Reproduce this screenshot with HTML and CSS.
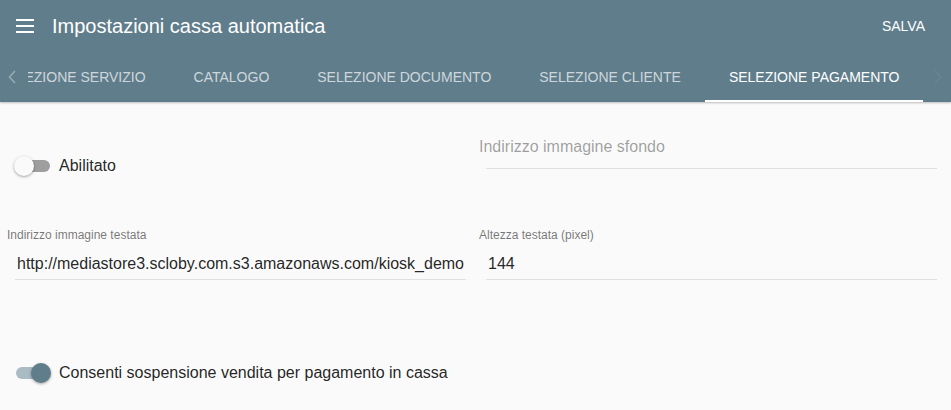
FILE: index.html
```html
<!DOCTYPE html>
<html lang="it">
<head>
<meta charset="utf-8">
<title>Impostazioni cassa automatica</title>
<link rel="stylesheet" href="styles.css">
</head>
<body>
<header class="appbar">
  <div class="toolbar">
    <span class="menu-btn" aria-label="menu">
      <svg width="18" height="14" viewBox="0 0 18 14"><rect x="0" y="0" width="18" height="2" fill="#fff"/><rect x="0" y="6" width="18" height="2" fill="#fff"/><rect x="0" y="12" width="18" height="2" fill="#fff"/></svg>
    </span>
    <h1 class="title">Impostazioni cassa automatica</h1>
    <span class="save">SALVA</span>
  </div>
  <nav class="tabs">
    <span class="pager pager-prev">
      <svg width="8" height="14" viewBox="0 0 8 14"><path d="M7 1 L1.5 7 L7 13" fill="none" stroke="currentColor" stroke-width="1.6"/></svg>
    </span>
    <div class="tab-viewport">
      <div class="tab-strip">
        <span class="tab">SELEZIONE SERVIZIO</span>
        <span class="tab">CATALOGO</span>
        <span class="tab">SELEZIONE DOCUMENTO</span>
        <span class="tab">SELEZIONE CLIENTE</span>
        <span class="tab active">SELEZIONE PAGAMENTO</span>
      </div>
    </div>
    <span class="pager pager-next">
      <svg width="8" height="14" viewBox="0 0 8 14"><path d="M1 1 L6.5 7 L1 13" fill="none" stroke="currentColor" stroke-width="1.6"/></svg>
    </span>
  </nav>
</header>
<main class="content">
  <div class="row row-first">
    <div class="switch-row switch-first">
      <span class="switch"><span class="track"></span><span class="thumb"></span></span>
      <span class="switch-label">Abilitato</span>
    </div>
    <div class="field field-empty">
      <div class="placeholder">Indirizzo immagine sfondo</div>
      <div class="underline"></div>
    </div>
  </div>
  <div class="row row-second">
    <div class="field">
      <div class="field-label">Indirizzo immagine testata</div>
      <div class="field-input">http://mediastore3.scloby.com.s3.amazonaws.com/kiosk_demo</div>
    </div>
    <div class="field">
      <div class="field-label">Altezza testata (pixel)</div>
      <div class="field-input">144</div>
    </div>
  </div>
  <div class="row row-third">
    <div class="switch-row">
      <span class="switch on"><span class="track"></span><span class="thumb"></span></span>
      <span class="switch-label">Consenti sospensione vendita per pagamento in cassa</span>
    </div>
  </div>
</main>
</body>
</html>
```
FILE: styles.css
```css
html, body {
  margin: 0;
  padding: 0;
}
body {
  background: #fafafa;
  font-family: "Liberation Sans", Arial, sans-serif;
  color: rgba(0, 0, 0, 0.87);
  width: 951px;
  height: 410px;
  overflow: hidden;
}
.appbar {
  background: #607d8b;
  color: #fff;
  box-shadow: 0 1px 2px rgba(0, 0, 0, 0.25);
  position: relative;
}
.toolbar {
  height: 52px;
  display: flex;
  align-items: center;
  padding: 0 26px 0 16px;
}
.menu-btn {
  display: flex;
  width: 18px;
  height: 14px;
}
.title {
  margin: 0 0 0 18px;
  font-size: 20px;
  font-weight: normal;
  line-height: 24px;
}
.save {
  margin-left: auto;
  font-size: 14px;
}
.tabs {
  height: 50px;
  display: flex;
}
.pager {
  width: 28px;
  flex: none;
  display: flex;
  align-items: center;
  justify-content: center;
  color: rgba(255, 255, 255, 0.35);
}
.pager-prev {
  justify-content: flex-start;
  padding-left: 8px;
  box-sizing: border-box;
}
.pager-next {
  color: rgba(255, 255, 255, 0.06);
  justify-content: flex-end;
  padding-right: 9px;
  box-sizing: border-box;
}
.tab-viewport {
  flex: 1;
  overflow: hidden;
}
.tab-strip {
  display: flex;
  margin-left: -54px;
  height: 50px;
}
.tab {
  flex: none;
  padding: 0 24px;
  line-height: 50px;
  font-size: 14px;
  color: rgba(255, 255, 255, 0.7);
  white-space: nowrap;
  position: relative;
}
.tab.active {
  color: #fff;
}
.tab.active::after {
  content: "";
  position: absolute;
  left: 0;
  right: 0;
  bottom: 0;
  height: 2px;
  background: #fff;
}
.content {
  padding: 35px 0 0 7px;
}
.row {
  display: grid;
  grid-template-columns: 472px 472px;
  align-items: start;
}
.row-second {
  margin-top: 52px;
}
.row-third {
  margin-top: 83px;
}
.switch-row {
  display: flex;
  align-items: center;
  height: 20px;
  padding-left: 7px;
}
.switch-first {
  margin-top: 19px;
}
.switch {
  position: relative;
  width: 36px;
  height: 20px;
  flex: none;
}
.track {
  position: absolute;
  left: 3px;
  right: 0;
  top: 4px;
  height: 12px;
  border-radius: 6px;
  background: #9e9e9e;
}
.thumb {
  position: absolute;
  left: 0;
  top: 0;
  width: 20px;
  height: 20px;
  border-radius: 50%;
  background: #fafafa;
  box-shadow: 0 1px 3px rgba(0, 0, 0, 0.35);
}
.switch.on .track {
  left: 2px;
  background: #abbbc3;
}
.switch.on .thumb {
  left: auto;
  right: -1px;
  background: #607d8b;
}
.switch-label {
  margin-left: 9px;
  font-size: 16px;
  line-height: 20px;
}
.placeholder {
  font-size: 16px;
  line-height: 20px;
  color: rgba(0, 0, 0, 0.38);
}
.underline {
  margin: 11px 0 0 7px;
  width: 451px;
  border-bottom: 1px solid #e0e0e0;
}
.field-label {
  font-size: 12px;
  line-height: 14px;
  color: rgba(0, 0, 0, 0.54);
}
.field-input {
  margin: 7px 0 0 8px;
  width: 451px;
  box-sizing: border-box;
  padding: 0 2px;
  height: 31px;
  line-height: 30px;
  font-size: 16px;
  border-bottom: 1px solid #e0e0e0;
  white-space: nowrap;
  overflow: hidden;
}
.row-second .field + .field .field-input {
  margin-left: 7px;
}
```
